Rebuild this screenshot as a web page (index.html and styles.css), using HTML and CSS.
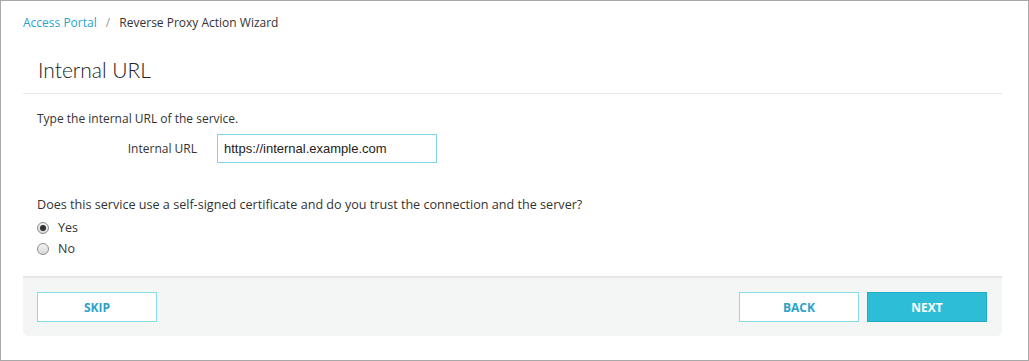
FILE: index.html
```html
<!DOCTYPE html>
<html lang="en">
<head>
  <meta charset="UTF-8" />
  <title>Reverse Proxy Action Wizard</title>
  <link rel="stylesheet" href="styles.css">
</head>
<body>
  <div class="frame">
    <div class="breadcrumb">
      <a href="#" class="crumb-link">Access Portal</a>
      <span class="crumb-sep">/</span>
      <span class="crumb-current">Reverse Proxy Action Wizard</span>
    </div>

    <div class="card">
      <div class="card-title">Internal URL</div>

      <div class="card-body">
        <p class="hint">Type the internal URL of the service.</p>
        <div class="form-row">
          <label class="form-label" for="internal-url">Internal URL</label>
          <input class="text-input" id="internal-url" type="text" value="https://internal.example.com" />
        </div>

        <p class="question">Does this service use a self-signed certificate and do you trust the connection and the server?</p>
        <label class="radio-row">
          <input type="radio" name="trust" class="radio" checked />
          <span>Yes</span>
        </label>
        <label class="radio-row">
          <input type="radio" name="trust" class="radio" />
          <span>No</span>
        </label>
      </div>

      <div class="card-footer">
        <button class="btn">SKIP</button>
        <div class="footer-right">
          <button class="btn">BACK</button>
          <button class="btn btn-primary">NEXT</button>
        </div>
      </div>
    </div>
  </div>
</body>
</html>
```

FILE: styles.css
```css
* {
  margin: 0;
  padding: 0;
  box-sizing: border-box;
}
body {
  font-family: 'Open Sans', 'Noto Sans', sans-serif;
  font-size: 12px;
  color: #333;
  background: #fff;
}
.frame {
  width: 1029px;
  height: 361px;
  border: 1px solid #a8a8a8;
  padding: 0 26px 0 22px;
}
/* Breadcrumb */
.breadcrumb {
  padding-top: 13px;
  line-height: 18px;
  font-size: 12px;
}
.crumb-link {
  color: #2ba2c8;
  text-decoration: none;
}
.crumb-sep {
  color: #999;
  margin: 0 6px;
}
.crumb-current {
  color: #333;
}
/* Card */
.card {
  margin-top: 13px;
  background: #fff;
}
.card-title {
  font-family: 'Lato', sans-serif;
  font-weight: 300;
  font-size: 21px;
  line-height: 24px;
  color: #222;
  padding: 13px 15px 11px;
  border-bottom: 1px solid #e9e9e9;
}
.card-body {
  padding: 16px 14px 17px;
  line-height: 18px;
}
.form-row {
  display: flex;
  align-items: center;
  gap: 20px;
  margin-top: 6px;
}
.form-label {
  width: 160px;
  text-align: right;
  color: #333;
}
.text-input {
  width: 220px;
  height: 29px;
  border: 1px solid #7fd5e6;
  padding: 0 6px;
  font-family: 'Liberation Sans', Arial, sans-serif;
  font-size: 13px;
  color: #222;
  outline: none;
}
.question {
  margin-top: 33px;
  font-size: 12.6px;
}
.radio-row {
  display: flex;
  align-items: center;
  gap: 9px;
  height: 20px;
  margin-top: 1px;
  font-size: 12.5px;
}
.radio-row:first-of-type {
  margin-top: 4px;
}
.radio {
  appearance: none;
  width: 12px;
  height: 12px;
  border: 1px solid #8e8e8e;
  border-radius: 50%;
  background: linear-gradient(#f4f4f4, #d8d8d8);
  position: relative;
}
.radio:checked::after {
  content: '';
  position: absolute;
  left: 2px;
  top: 2px;
  width: 6px;
  height: 6px;
  border-radius: 50%;
  background: #333;
}
/* Footer */
.card-footer {
  display: flex;
  justify-content: space-between;
  padding: 14px 15px 14px 14px;
  background: #f4f5f5;
  border-top: 2px solid #e6e6e6;
  border-radius: 0 0 5px 5px;
}
.footer-right {
  display: flex;
  gap: 8px;
}
.btn {
  width: 120px;
  height: 30px;
  background: #fff;
  border: 1px solid #86dbea;
  color: #2ba2c8;
  font-family: 'Open Sans', sans-serif;
  font-weight: 700;
  font-size: 12px;
  cursor: pointer;
}
.btn-primary {
  background: #2dbdd6;
  border-color: #1eabc8;
  color: #fff;
}
```
